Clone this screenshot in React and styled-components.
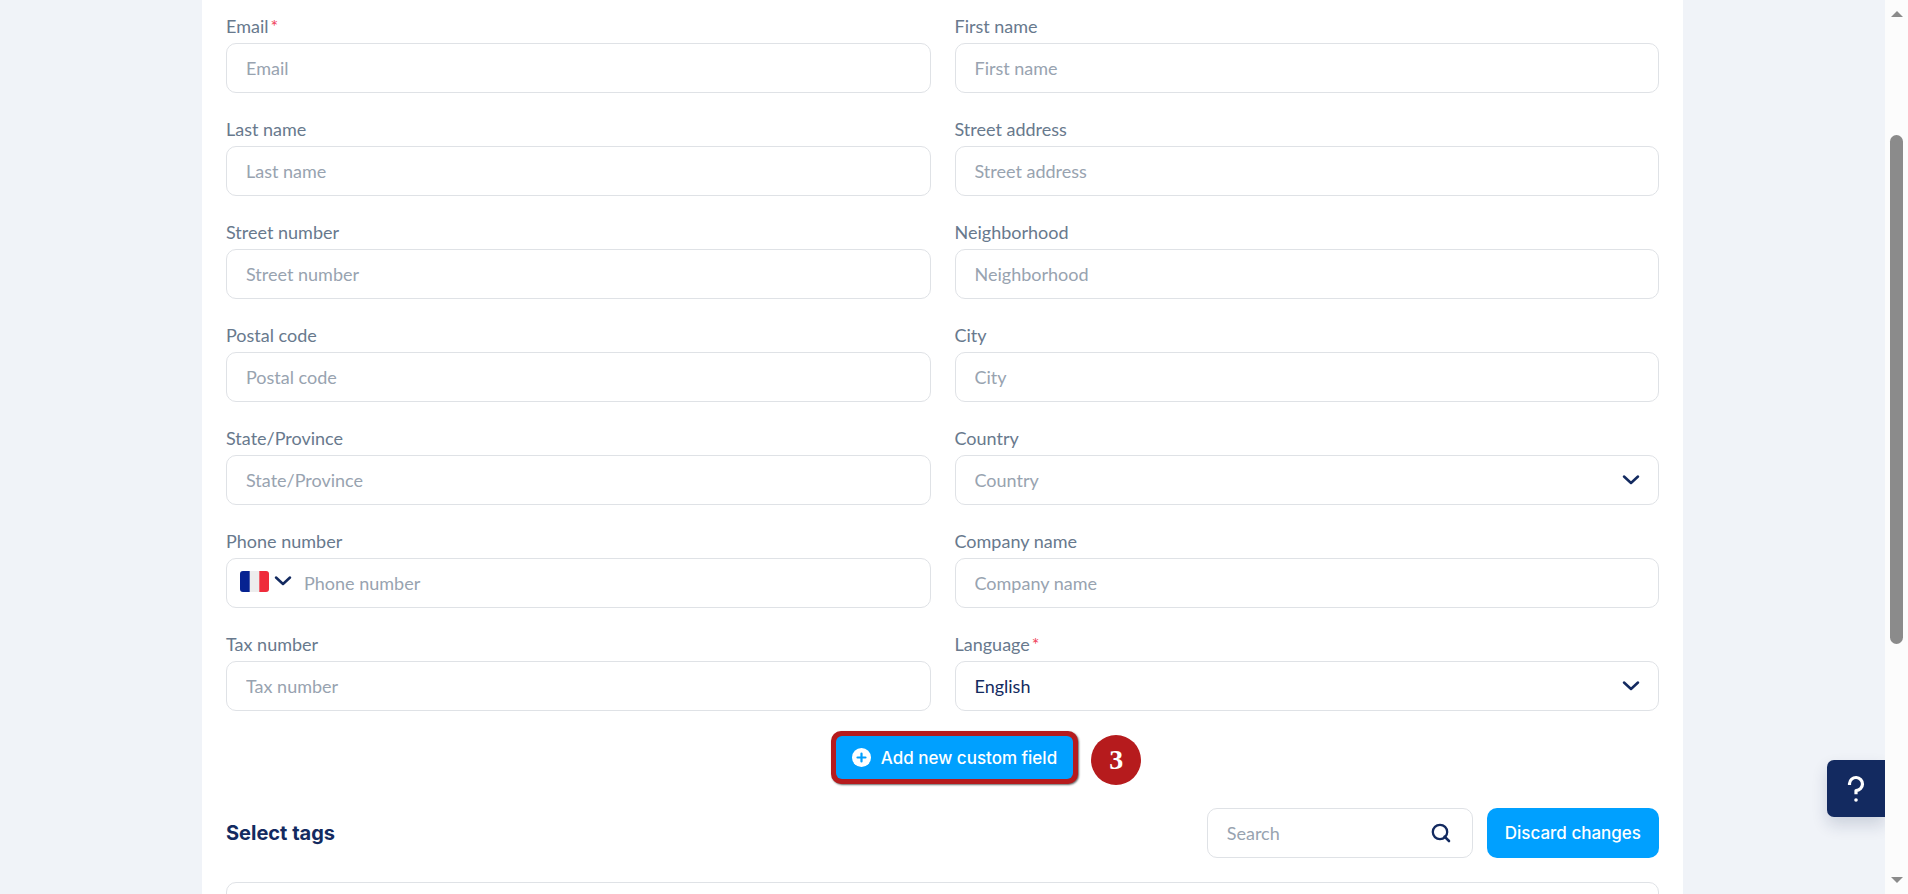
import React, { useState } from 'react'
import styled, { createGlobalStyle } from 'styled-components'

const navy = '#132a60'
const blue = '#00a0ff'
const red = '#b61b1d'
const border = '#dfe2e6'
const textFont = 'Lato, "Liberation Sans", sans-serif'
const uiFont = 'Inter, "Liberation Sans", sans-serif'

const GlobalStyle = createGlobalStyle`
  * {
    box-sizing: border-box;
  }

  body {
    margin: 0;
    background: #f0f3f8;
    color: ${navy};
    font-family: ${textFont};
    font-size: 18px;
    line-height: 24px;
  }

  input, select, button {
    font: inherit;
    color: inherit;
  }
`

const Shell = styled.div`
  display: flex;
  height: 100vh;
  overflow: hidden;
`

const Main = styled.main`
  position: relative;
  flex: 1;
  min-width: 0;
  overflow: hidden;
`

const Panel = styled.div`
  max-width: 1481px;
  min-height: 100%;
  margin: 0 auto;
  padding: 14px 24px 0;
  background: #fff;
`

const Fields = styled.div`
  display: grid;
  grid-template-columns: 1fr 1fr;
  gap: 24px;
`

const Field = styled.div`
  display: flex;
  flex-direction: column;
  gap: 5px;
`

const Label = styled.label`
  color: #68798d;
`

const Required = styled.span`
  margin-left: 2px;
  color: #f0425a;
`

const Box = styled.div`
  display: flex;
  align-items: center;
  height: 50px;
  border: 1px solid ${border};
  border-radius: 10px;
  background: #fff;
`

const TextInput = styled.input`
  flex: 1;
  min-width: 0;
  height: 100%;
  padding: 0 19px;
  border: 0;
  border-radius: 10px;
  outline: 0;
  background: transparent;

  &::placeholder {
    color: #98a3b0;
    opacity: 1;
  }
`

const PhoneInput = styled(TextInput)`
  padding-left: 12px;
`

const SelectInput = styled.select`
  grid-area: 1 / 1;
  width: 100%;
  height: 50px;
  padding: 0 50px 0 19px;
  border: 1px solid ${border};
  border-radius: 10px;
  outline: 0;
  appearance: none;
  background: #fff;
  color: ${props => (props.$empty ? '#98a3b0' : navy)};
`

const SelectWrap = styled.div`
  display: grid;
  align-items: center;

  > svg {
    grid-area: 1 / 1;
    justify-self: end;
    margin-right: 19px;
    pointer-events: none;
  }
`

const CountryButton = styled.button`
  display: flex;
  align-items: center;
  gap: 5px;
  padding: 0 0 4px 13px;
  border: 0;
  background: transparent;
`

const AddRow = styled.div`
  display: flex;
  justify-content: center;
  margin-top: 20px;
  padding-left: 24px;
`

const Highlight = styled.div`
  position: relative;
  border: 5px solid ${red};
  border-radius: 10px;
  background: ${red};
  box-shadow: 1px 1px 2px rgba(0, 0, 0, 0.6);
`

const Button = styled.button`
  display: flex;
  align-items: center;
  justify-content: center;
  gap: 10px;
  height: ${props => (props.$compact ? 43 : 50)}px;
  padding: 0 ${props => (props.$compact ? 16 : 18)}px;
  border: 0;
  border-radius: ${props => (props.$compact ? 6 : 10)}px;
  background: ${blue};
  color: #fff;
  font-family: ${uiFont};
  font-size: 17px;
  font-weight: 500;
  white-space: nowrap;
`

const StepBadge = styled.span`
  position: absolute;
  top: -1px;
  left: calc(100% + 18px);
  width: 50px;
  height: 50px;
  border-radius: 50%;
  background: ${red};
  color: #fff;
  font-family: 'Liberation Serif', serif;
  font-size: 28px;
  font-weight: 700;
  line-height: 50px;
  text-align: center;
`

const TagsHeader = styled.div`
  display: flex;
  align-items: center;
  gap: 14px;
  margin-top: 24px;
`

const Title = styled.h2`
  flex: 1;
  margin: 0;
  font-family: ${uiFont};
  font-size: 20px;
  font-weight: 700;
`

const SearchBox = styled(Box)`
  width: 266px;
  padding-right: 21px;
`

const TagsBox = styled.div`
  height: 120px;
  margin-top: 24px;
  border: 1px solid ${border};
  border-radius: 10px;
`

const HelpButton = styled.button`
  position: absolute;
  right: 0;
  bottom: 77px;
  display: flex;
  align-items: center;
  justify-content: center;
  width: 58px;
  height: 57px;
  padding: 0;
  border: 0;
  border-radius: 7px 0 0 7px;
  background: ${navy};
  box-shadow: 0 8px 16px rgba(20, 40, 80, 0.16);
`

const Scrollbar = styled.div`
  display: flex;
  flex-direction: column;
  align-items: center;
  width: 23px;
  padding: 11px 0;
  background: #fcfcfc;
`

const Arrow = styled.span`
  border: solid transparent;
  border-width: 0 6px 6px;
  border-bottom-color: #8b8b8b;
  transform: ${props => (props.$down ? 'rotate(180deg)' : 'none')};
`

const Gap = styled.span`
  flex: ${props => props.$grow};
`

const Thumb = styled.span`
  flex: 509;
  width: 13px;
  border-radius: 7px;
  background: #8b8b8b;
`

const fields = [
  { id: 'email', label: 'Email', required: true },
  { id: 'first-name', label: 'First name' },
  { id: 'last-name', label: 'Last name' },
  { id: 'street-address', label: 'Street address' },
  { id: 'street-number', label: 'Street number' },
  { id: 'neighborhood', label: 'Neighborhood' },
  { id: 'postal-code', label: 'Postal code' },
  { id: 'city', label: 'City' },
  { id: 'state', label: 'State/Province' },
  { id: 'country', label: 'Country', type: 'select', options: ['France', 'Spain'] },
  { id: 'phone', label: 'Phone number', type: 'phone' },
  { id: 'company', label: 'Company name' },
  { id: 'tax', label: 'Tax number' },
  {
    id: 'language',
    label: 'Language',
    type: 'select',
    required: true,
    initial: 'English',
    options: ['English', 'French'],
  },
]

function Chevron() {
  return (
    <svg width="18" height="12" viewBox="0 0 18 12" fill="none" aria-hidden="true">
      <path
        d="M2 2.5 L9 9 L16 2.5"
        stroke={navy}
        strokeWidth="2.5"
        strokeLinecap="round"
        strokeLinejoin="round"
      />
    </svg>
  )
}

function Flag() {
  return (
    <svg width="29" height="21" viewBox="0 0 29 21" aria-hidden="true">
      <rect width="29" height="21" rx="3" fill="#ededed" />
      <path d="M3 0h6.7v21H3a3 3 0 0 1-3-3V3a3 3 0 0 1 3-3z" fill="#062291" />
      <path d="M19.3 0H26a3 3 0 0 1 3 3v15a3 3 0 0 1-3 3h-6.7z" fill="#ef2b3b" />
    </svg>
  )
}

function PlusIcon() {
  return (
    <svg width="19" height="19" viewBox="0 0 19 19" aria-hidden="true">
      <circle cx="9.5" cy="9.5" r="9.5" fill="#fff" />
      <path d="M9.5 5.5v8M5.5 9.5h8" stroke={blue} strokeWidth="2.2" strokeLinecap="round" />
    </svg>
  )
}

function SearchIcon() {
  return (
    <svg width="20" height="20" viewBox="0 0 20 20" fill="none" aria-hidden="true">
      <circle cx="9" cy="9" r="7.2" stroke={navy} strokeWidth="2.3" />
      <path d="M13.6 13.6 L18 18" stroke={navy} strokeWidth="2.6" strokeLinecap="round" />
    </svg>
  )
}

function HelpIcon() {
  return (
    <svg width="18" height="28" viewBox="0 0 18 28" fill="none" aria-hidden="true">
      <path
        d="M2.5 10 V8.5 A6.5 6.5 0 1 1 9 15.5 V19.3"
        stroke="#fff"
        strokeWidth="3.2"
        strokeLinejoin="round"
      />
      <circle cx="9" cy="25" r="1.8" fill="#fff" />
    </svg>
  )
}

function SelectField({ id, label, options, initial = '' }) {
  const [value, setValue] = useState(initial)
  return (
    <SelectWrap>
      <SelectInput
        id={id}
        value={value}
        $empty={!value}
        onChange={e => setValue(e.target.value)}
      >
        {!initial && <option value="">{label}</option>}
        {options.map(o => (
          <option key={o}>{o}</option>
        ))}
      </SelectInput>
      <Chevron />
    </SelectWrap>
  )
}

function FormField({ id, label, type, required, ...rest }) {
  return (
    <Field>
      <Label htmlFor={id}>
        {label}
        {required && <Required>*</Required>}
      </Label>
      {type === 'select' && <SelectField id={id} label={label} {...rest} />}
      {type === 'phone' && (
        <Box>
          <CountryButton type="button" aria-label="France">
            <Flag />
            <Chevron />
          </CountryButton>
          <PhoneInput id={id} type="tel" placeholder={label} />
        </Box>
      )}
      {!type && (
        <Box>
          <TextInput id={id} placeholder={label} />
        </Box>
      )}
    </Field>
  )
}

export default function App() {
  return (
    <Shell>
      <GlobalStyle />
      <Main>
        <Panel>
          <Fields>
            {fields.map(f => (
              <FormField key={f.id} {...f} />
            ))}
          </Fields>
          <AddRow>
            <Highlight>
              <Button type="button" $compact>
                <PlusIcon />
                Add new custom field
              </Button>
              <StepBadge>3</StepBadge>
            </Highlight>
          </AddRow>
          <TagsHeader>
            <Title>Select tags</Title>
            <SearchBox>
              <TextInput type="text" placeholder="Search" aria-label="Search" />
              <SearchIcon />
            </SearchBox>
            <Button type="button">Discard changes</Button>
          </TagsHeader>
          <TagsBox />
        </Panel>
        <HelpButton type="button" aria-label="Help">
          <HelpIcon />
        </HelpButton>
      </Main>
      <Scrollbar aria-hidden="true">
        <Arrow />
        <Gap $grow={118} />
        <Thumb />
        <Gap $grow={233} />
        <Arrow $down />
      </Scrollbar>
    </Shell>
  )
}
